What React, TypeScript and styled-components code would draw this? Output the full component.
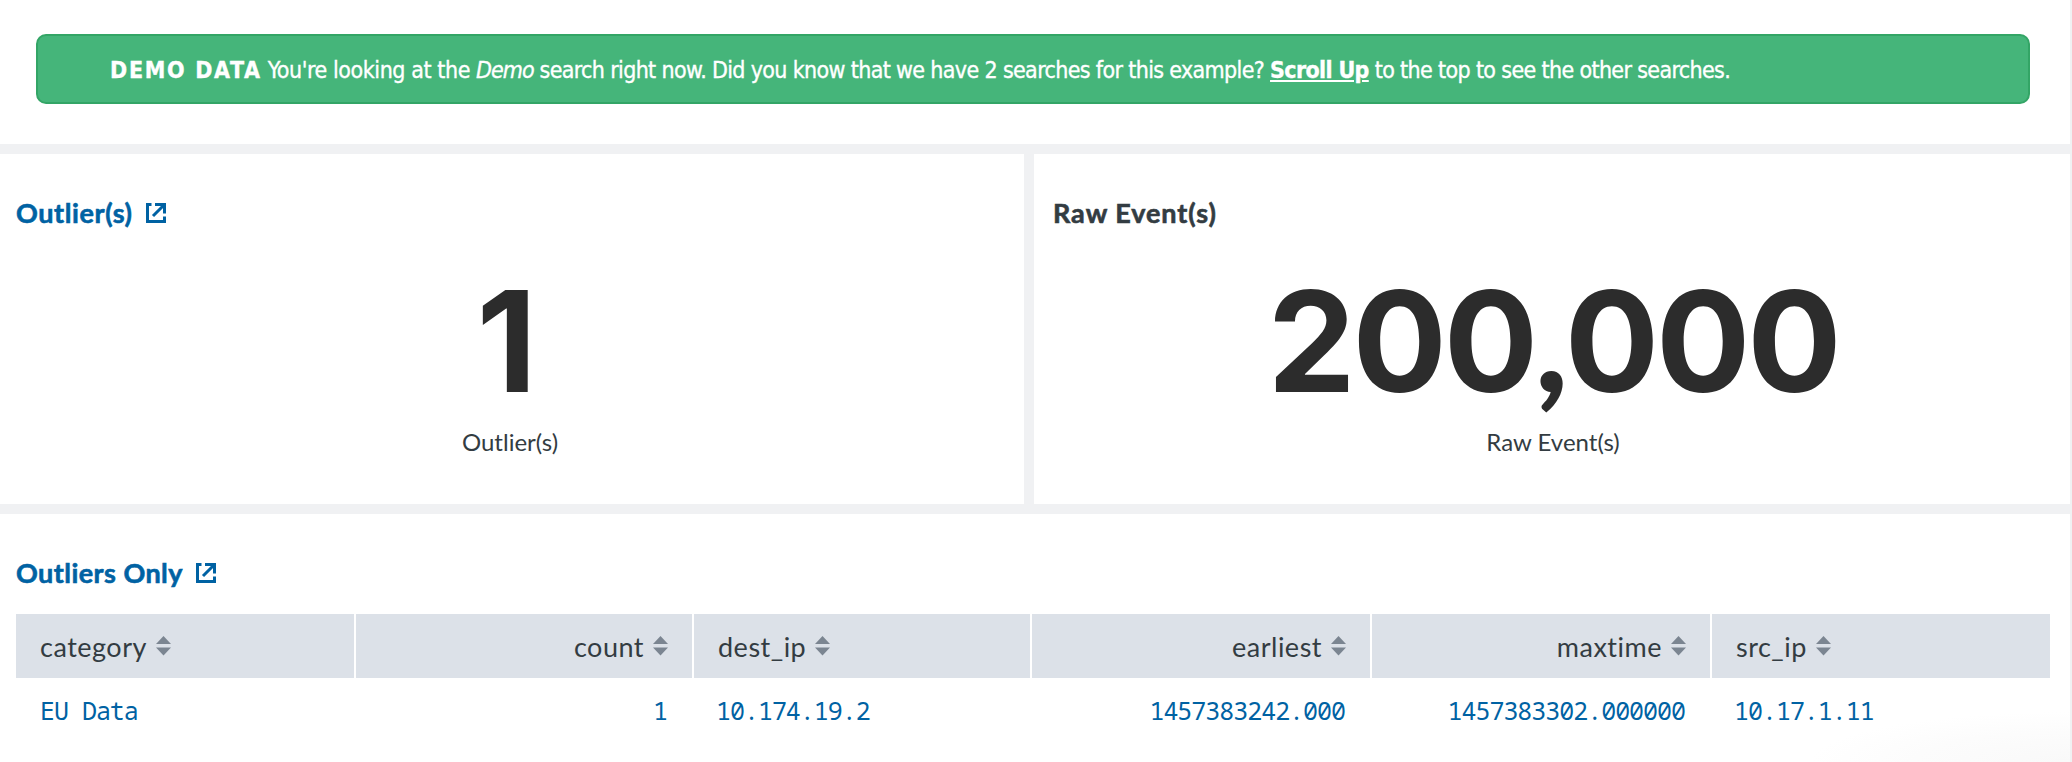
import React from 'react';
import styled, { createGlobalStyle } from 'styled-components';

const GlobalStyle = createGlobalStyle`
  * { box-sizing: border-box; }
  body { margin: 0; background: #f0f1f3; font-family: Lato, "Liberation Sans", sans-serif; }
`;

const Dashboard = styled.main`
  display: flex;
  flex-direction: column;
  gap: 10px;
  width: 2070px;
  height: 762px;
  overflow: hidden;
`;

const BannerPanel = styled.section`
  flex: 0 0 144px;
  padding: 34px 40px 0 36px;
  background: #fff;
`;

const Banner = styled.div`
  height: 70px;
  padding-left: 72px;
  border: 2px solid #33a566;
  border-radius: 10px;
  background: #45b57a;
  color: #fff;
  font: 23px/68px "DejaVu Sans Condensed", "DejaVu Sans", sans-serif;
  letter-spacing: -0.65px;
  white-space: nowrap;
  -webkit-text-stroke: 0.35px #fff;
`;

const Tag = styled.strong`
  letter-spacing: 1.7px;
`;

const Lead = styled.span`
  letter-spacing: -0.43px;
`;

const Emphasis = styled.em`
  letter-spacing: -1px;
`;

const ScrollLink = styled.a`
  color: #fff;
  font-weight: bold;
  text-decoration: underline;
  text-decoration-thickness: 2px;
  text-underline-offset: 2px;
`;

const MetricRow = styled.section`
  display: grid;
  grid-template-columns: 1024px 1fr;
  gap: 10px;
  flex: 0 0 350px;
`;

const Panel = styled.section<{ $inset?: number }>`
  display: flex;
  flex-direction: column;
  padding: 41px 20px 0 ${p => p.$inset ?? 16}px;
  background: #fff;
`;

const TablePanel = styled(Panel)`
  flex: 1;
  background: radial-gradient(ellipse 260px 50px at 100% 100%, #f9f9f9, #fcfcfc 60%, #fff) #fff;
`;

const Title = styled.h2<{ $link?: boolean; $tracking: number }>`
  display: flex;
  align-items: center;
  gap: 13px;
  height: 36px;
  margin: 0;
  color: ${p => (p.$link ? '#0062a3' : '#333c42')};
  font-size: 27px;
  font-weight: 700;
  line-height: 36px;
  letter-spacing: ${p => p.$tracking}px;
  -webkit-text-stroke: 0.6px currentColor;
`;

const Metric = styled.div<{ $inset?: number }>`
  display: flex;
  flex-direction: column;
  align-items: center;
  margin-top: 25px;
  padding-left: ${p => p.$inset ?? 0}px;
  white-space: nowrap;
`;

const MetricValue = styled.div<{ $trail?: number }>`
  padding-right: ${p => p.$trail ?? 0}px;
  color: #2c2c2c;
  font: 700 140px/170px Inter, sans-serif;
  letter-spacing: -3.2px;
`;

const Separator = styled.span`
  font-family: Lato, sans-serif;
  font-weight: 900;
  line-height: 1;
`;

const MetricLabel = styled.div`
  color: #333c42;
  font-size: 24px;
  line-height: 32px;
`;

const Table = styled.table`
  width: 2034px;
  margin-top: 23px;
  border-collapse: separate;
  border-spacing: 0;
  table-layout: fixed;
`;

const HeadCell = styled.th<{ $right?: boolean }>`
  height: 64px;
  padding: 0 24px;
  border-right: 2px solid #fff;
  background: #dce1e8;
  color: #333c42;
  font-size: 27px;
  font-weight: 400;
  text-align: ${p => (p.$right ? 'right' : 'left')};
  &:last-child { border-right: 0; }
`;

const HeadLabel = styled.span`
  display: inline-flex;
  align-items: center;
  gap: 9px;
  letter-spacing: 0.5px;
`;

const Cell = styled.td<{ $right?: boolean; $numeric?: boolean }>`
  height: 64px;
  padding: 0 27px 0 ${p => (p.$numeric ? 22 : 24)}px;
  color: #0062a3;
  font: 25px/64px "Noto Sans Mono", "DejaVu Sans Mono", monospace;
  letter-spacing: -1.03px;
  text-align: ${p => (p.$right ? 'right' : 'left')};
`;

const OpenIcon = () => (
  <svg width="20" height="20" viewBox="0 0 20 20" fill="none" stroke="currentColor" strokeWidth="3">
    <path d="M5.5 1.5h-4v17h17v-5" />
    <path d="M9 1.5h9.5v9M18 2L7 13" />
  </svg>
);

const SortIcon = () => (
  <svg width="15" height="20" viewBox="0 0 15 20" fill="#7b8591">
    <path d="M7.5 0L15 8H0zM0 11.5h15l-7.5 8z" />
  </svg>
);

const columns = [
  { name: 'category', value: 'EU Data', right: false, width: 340 },
  { name: 'count', value: '1', right: true, width: 338 },
  { name: 'dest_ip', value: '10.174.19.2', right: false, width: 338 },
  { name: 'earliest', value: '1457383242.000', right: true, width: 340 },
  { name: 'maxtime', value: '1457383302.000000', right: true, width: 340 },
  { name: 'src_ip', value: '10.17.1.11', right: false, width: 338 },
];

export default function App() {
  return (
    <>
      <GlobalStyle />
      <Dashboard>
        <BannerPanel>
          <Banner>
            <Tag>DEMO DATA</Tag> <Lead>You're looking at the </Lead>
            <Emphasis>Demo</Emphasis> search right now. Did you know that we have 2 searches for this
            example? <ScrollLink>Scroll Up</ScrollLink> to the top to see the other searches.
          </Banner>
        </BannerPanel>
        <MetricRow>
          <Panel>
            <Title $link $tracking={0.6}>Outlier(s) <OpenIcon /></Title>
            <Metric>
              <MetricValue $trail={10}>1</MetricValue>
              <MetricLabel>Outlier(s)</MetricLabel>
            </Metric>
          </Panel>
          <Panel $inset={19}>
            <Title $tracking={0.95}>Raw Event(s)</Title>
            <Metric $inset={3}>
              <MetricValue>200<Separator>,</Separator>000</MetricValue>
              <MetricLabel>Raw Event(s)</MetricLabel>
            </Metric>
          </Panel>
        </MetricRow>
        <TablePanel>
          <Title $link $tracking={0.45}>Outliers Only <OpenIcon /></Title>
          <Table>
            <colgroup>{columns.map(c => <col key={c.name} width={c.width} />)}</colgroup>
            <thead>
              <tr>
                {columns.map(c => (
                  <HeadCell key={c.name} $right={c.right}>
                    <HeadLabel>{c.name}<SortIcon /></HeadLabel>
                  </HeadCell>
                ))}
              </tr>
            </thead>
            <tbody>
              <tr>
                {columns.map(c => (
                  <Cell key={c.name} $right={c.right} $numeric={/^\d/.test(c.value)}>{c.value}</Cell>
                ))}
              </tr>
            </tbody>
          </Table>
        </TablePanel>
      </Dashboard>
    </>
  );
}
